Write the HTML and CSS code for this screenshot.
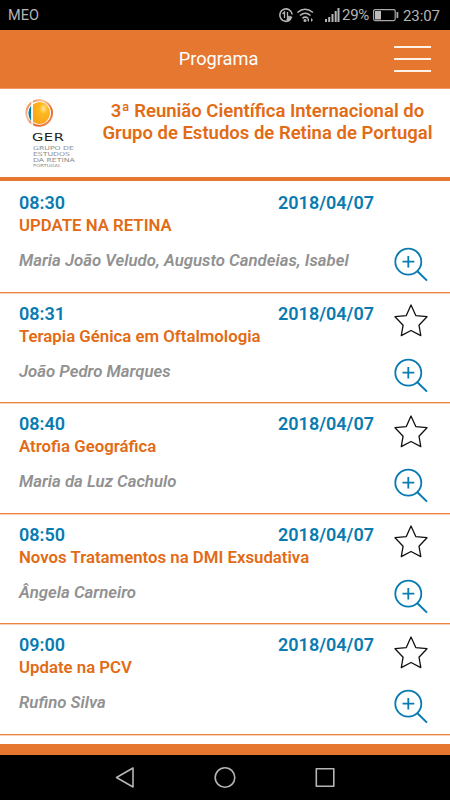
FILE: index.html
```html
<!DOCTYPE html>
<html lang="pt">
<head>
<meta charset="utf-8">
<title>Programa</title>
<link rel="stylesheet" href="styles.css">
</head>
<body>
<svg class="defs" aria-hidden="true">
  <symbol id="zoom" viewBox="0 0 36 36"><g fill="none" stroke="#087bb1" stroke-width="1.8"><circle cx="15.3" cy="15.7" r="13"/><path d="M15.3 10v11.6M9.5 15.7h11.8"/><path d="M24.4 25.2L34 34.6" stroke-width="2"/></g></symbol>
  <symbol id="star" viewBox="0 0 36 36"><path d="M18 3L22.8 13.6L34 14.7L26 23.2L27.8 33.6L18 28.5L8.3 33.6L10.1 23.2L2 14.7L13.3 13.6Z" fill="none" stroke="#111" stroke-width="1.3" stroke-linejoin="round"/></symbol>
</svg>
<div class="status">
  <span class="carrier">MEO</span>
  <svg class="status-icons" width="64" height="30" viewBox="277 0 64 30">
    <g fill="none" stroke="#b5b5b5" stroke-width="1.6">
      <path d="M290.8 19.1A6.2 6.2 0 1 1 292.2 14.5"/>
      <path d="M284.5 18v-6l-2 2M287.5 12v6l2-2" stroke-width="1.3"/>
      <path d="M287 20.500l4.700-3.700" stroke-width="2.600"/>
      <path d="M297.500 12.500q7.500-6.500 15.500 0M300 15.500q5.200-4.500 10.500 0M302.500 18.300q2.700-2.300 5.500 0"/>
    </g>
    <g fill="#b5b5b5"><circle cx="305" cy="20.400" r="1.500"/><path d="M307 20l2-2v4zM313 20l-2-2v4zM325 19h2v3h-2zM328.200 17h2v5h-2zM331.500 14h2v8h-2zM334.700 11h2v11h-2zM337.500 8h2v14h-2z"/></g>
  </svg>
  <span class="percent">29%</span>
  <svg class="battery" width="26" height="14" viewBox="0 0 26 14"><rect x=".6" y="1.600" width="21.600" height="11" rx="1.500" fill="none" stroke="#a8a8a8" stroke-width="1.200"/><path d="M2 3h6v8.500H2z" fill="#bbb"/><path d="M23.500 4h1.800v6h-1.800z" fill="#a8a8a8"/></svg>
  <span class="clock">23:07</span>
</div>
<header class="bar"><h1>Programa</h1><div class="menu"><i></i><i></i><i></i></div></header>
<section class="event">
  <div class="logo">
    <svg width="32" height="32" viewBox="24 97 32 32">
      <defs>
        <radialGradient id="gold" cx=".62" cy=".3" r=".7"><stop offset="0" stop-color="#ffe69a"/><stop offset=".35" stop-color="#fdb81e"/><stop offset="1" stop-color="#f9a51a"/></radialGradient>
        <linearGradient id="ring" x1="0" y1="0" x2="1" y2="1"><stop offset="0" stop-color="#e87432"/><stop offset=".35" stop-color="#f6c7a5"/><stop offset=".7" stop-color="#e76624"/><stop offset="1" stop-color="#efa070"/></linearGradient>
      </defs>
      <circle cx="39.200" cy="113" r="12.800" fill="#fff" stroke="url(#ring)" stroke-width="2"/>
      <path d="M31.200 105.200Q25.500 113 31.200 121.500Z" fill="#087da9"/>
      <path d="M33 104.500Q36 102 39.500 102A10.500 11 0 0 1 39.500 124Q36 124 33 122Z" fill="url(#gold)"/>
      <path d="M32.100 98v30" stroke="#fff" stroke-width="1.500"/>
    </svg>
    <div class="ger">GER</div>
    <div class="sub">GRUPO DE<br>ESTUDOS<br>DA RETINA</div>
    <div class="country">PORTUGAL</div>
  </div>
  <h2>3ª Reunião Científica Internacional do<br>Grupo de Estudos de Retina de Portugal</h2>
</section>
<main class="list">
  <article class="row"><div class="info"><div class="when"><time>08:30</time><time>2018/04/07</time></div><h3>UPDATE NA RETINA</h3><p>Maria João Veludo, Augusto Candeias, Isabel</p></div><div class="actions"><svg><use href="#zoom"/></svg></div></article>
  <article class="row"><div class="info"><div class="when"><time>08:31</time><time>2018/04/07</time></div><h3>Terapia Génica em Oftalmologia</h3><p>João Pedro Marques</p></div><div class="actions"><svg><use href="#star"/></svg><svg><use href="#zoom"/></svg></div></article>
  <article class="row"><div class="info"><div class="when"><time>08:40</time><time>2018/04/07</time></div><h3>Atrofia Geográfica</h3><p>Maria da Luz Cachulo</p></div><div class="actions"><svg><use href="#star"/></svg><svg><use href="#zoom"/></svg></div></article>
  <article class="row"><div class="info"><div class="when"><time>08:50</time><time>2018/04/07</time></div><h3>Novos Tratamentos na DMI Exsudativa</h3><p>Ângela Carneiro</p></div><div class="actions"><svg><use href="#star"/></svg><svg><use href="#zoom"/></svg></div></article>
  <article class="row"><div class="info"><div class="when"><time>09:00</time><time>2018/04/07</time></div><h3>Update na PCV</h3><p>Rufino Silva</p></div><div class="actions"><svg><use href="#star"/></svg><svg><use href="#zoom"/></svg></div></article>
</main>
<div class="foot"></div>
<nav class="nav">
  <svg width="220" height="45" viewBox="115 755 220 45" fill="none" stroke="#b5b5b5" stroke-width="1.600" stroke-linejoin="round"><path d="M133 768v19L116.500 777.500Z"/><circle cx="225" cy="777.500" r="9.800"/><path d="M316.300 768.800h17.500v17.400h-17.500z"/></svg>
</nav>
</body>
</html>
```
FILE: styles.css
```css
* { box-sizing: border-box; margin: 0; padding: 0; }
body { width: 450px; height: 800px; overflow: hidden; background: #fff; font-family: Roboto, "Liberation Sans", sans-serif; display: flex; flex-direction: column; }
.defs { display: none; }
.status { height: 30px; flex: none; background: #000; color: #b5b5b5; display: flex; align-items: center; padding: 0 10px 0 8px; line-height: 30px; white-space: nowrap; }
.carrier { font-size: 14.5px; margin-right: auto; padding-top: 1px; }
.percent { font-size: 15px; padding-left: 1px; width: 32px; letter-spacing: -.3px; }
.battery { margin-right: 4px; }
.clock { font-size: 15px; width: 37px; padding-top: 1px; letter-spacing: -.1px; }
.bar { height: 59px; flex: none; background: #e67731; border-bottom: 1px solid #f19a68; color: #fff; display: grid; grid-template-columns: 1fr 37px; align-items: center; padding: 0 19px 0 0; }
.bar h1 { font-size: 18.2px; font-weight: 400; text-align: center; padding: 0 0 0 43px; line-height: 24px; }
.menu { display: grid; gap: 10px; }
.menu i { height: 2px; background: #fff3e8; }
.event { height: 92px; flex: none; border-bottom: 4px solid #e67731; display: flex; }
.logo { width: 98px; padding: 8px 0 0 24px; color: #8c8c8c; font-family: "DejaVu Sans", sans-serif; white-space: nowrap; }
.logo svg { display: block; }
.ger { color: #222; font-size: 11px; line-height: 10px; margin: 3.5px 0 2.5px 8px; letter-spacing: .4px; transform: scaleX(1.33); transform-origin: left; }
.sub { font-size: 5.5px; line-height: 6px; margin-left: 8.5px; transform: scaleX(1.4); transform-origin: left; }
.country { font-size: 4px; line-height: 6px; margin-left: 9px; transform: scaleX(1.3); transform-origin: left; }
.event h2 { color: #e26b15; font-size: 18.5px; font-weight: 600; line-height: 22px; text-align: center; width: 340px; padding-top: 11px; margin-left: -.5px; white-space: nowrap; }
.list { height: 563px; flex: none; padding-top: 1.4px; }
.row { height: 110.5px; border-bottom: 1px solid #ec8440; box-shadow: 0 1px #f9d2b8; display: flex; justify-content: space-between; padding-left: 19px; }
.info { width: 355px; padding-top: 9.9px; }
.when { display: flex; justify-content: space-between; font-size: 18px; font-weight: 600; line-height: 22px; color: #087bb1; }
.row h3 { font-size: 16.8px; font-weight: 600; line-height: 22px; color: #e26b15; padding-top: .2px; white-space: nowrap; }
.row p { font-size: 16.8px; font-weight: 600; font-style: italic; line-height: 22px; color: #919191; padding-top: 13px; white-space: nowrap; }
.actions { width: 57px; display: flex; flex-direction: column; justify-content: flex-end; gap: 18.6px; padding-bottom: 9.6px; }
.actions svg { width: 36px; height: 36px; display: block; }
.foot { height: 11px; flex: none; background: #e67731; }
.nav { height: 45px; flex: none; background: #000; display: flex; justify-content: center; }
```
